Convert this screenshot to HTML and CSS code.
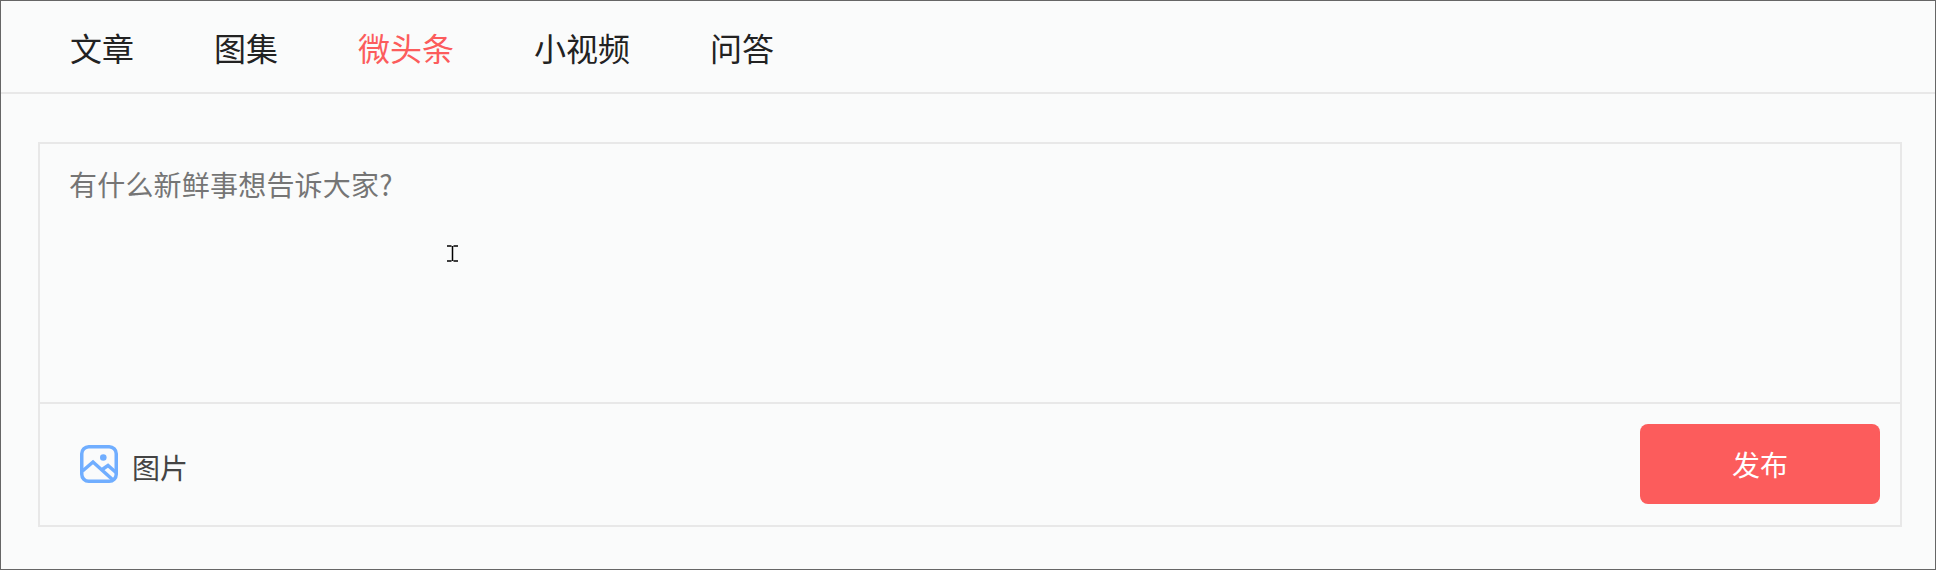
FILE: index.html
```html
<!DOCTYPE html>
<html>
  <head>
    <title>发布微头条</title>
    <link rel="stylesheet" href="styles.css">
  </head>
  <body>
    <div class="page">
      <div class="tabs">
        <a class="tab">文章</a>
        <a class="tab">图集</a>
        <a class="tab active">微头条</a>
        <a class="tab">小视频</a>
        <a class="tab">问答</a>
      </div>
      <div class="content">
        <div class="editor">
          <textarea class="editor-input" placeholder="有什么新鲜事想告诉大家?"></textarea>
          <svg class="ibeam" width="11" height="17" viewBox="0 0 11 17">
            <path d="M0 1h4.500M6.500 1H11M5.500 1v15M0 16h4.500M6.500 16H11" fill="none" stroke="#000" stroke-width="1.500"/>
          </svg>
          <div class="toolbar">
            <div class="add-image">
              <svg class="image-icon" width="38" height="38" viewBox="0 0 38 38">
                <rect x="1.750" y="1.750" width="34.500" height="34.500" rx="7" fill="none" stroke="#70aeff" stroke-width="3.500"/>
                <circle cx="23.300" cy="12.500" r="3.300" fill="#70aeff"/>
                <path d="M2.500 26 L13 17 L33 35 M21.500 25 L28 20.500 L36 27.500" fill="none" stroke="#70aeff" stroke-width="3.500"/>
              </svg>
              <span class="add-image-label">图片</span>
            </div>
            <button class="publish">发布</button>
          </div>
        </div>
      </div>
    </div>
  </body>
</html>
```

FILE: styles.css
```css
* {
  box-sizing: border-box;
}
body {
  margin: 0;
  font-family: "Noto Sans CJK SC", "Liberation Sans", sans-serif;
  background-color: #fafbfb;
}
.page {
  height: 570px;
  border: 1px solid #666;
}
.tabs {
  display: flex;
  gap: 80px;
  height: 93px;
  padding-left: 69px;
  align-items: center;
  border-bottom: 2px solid #e8e8e8;
}
.tab {
  font-size: 32px;
  line-height: 40px;
  color: #222;
}
.tab.active {
  color: #fc5c5c;
}
.content {
  padding: 48px 33px 0 37px;
}
.editor {
  position: relative;
  height: 385px;
  border: 2px solid #e8e8e8;
}
.editor-input {
  display: block;
  width: 100%;
  height: 258px;
  padding: 20px 29px;
  border: none;
  outline: none;
  resize: none;
  background: transparent;
  font-family: inherit;
  font-size: 28px;
  line-height: 40px;
  letter-spacing: 0.2px;
}
.editor-input::placeholder {
  color: #757575;
}
.ibeam {
  position: absolute;
  left: 407px;
  top: 101px;
}
.toolbar {
  display: flex;
  justify-content: space-between;
  align-items: center;
  height: 123px;
  padding: 0 20px 1px 40px;
  border-top: 2px solid #e8e8e8;
}
.add-image {
  display: flex;
  align-items: center;
  gap: 14px;
  font-size: 28px;
  color: #444;
}
.add-image-label {
  padding-top: 6px;
}
.publish {
  width: 240px;
  height: 80px;
  border: none;
  border-radius: 8px;
  background-color: #fc5c5c;
  color: white;
  font-family: inherit;
  font-size: 28px;
}
```
